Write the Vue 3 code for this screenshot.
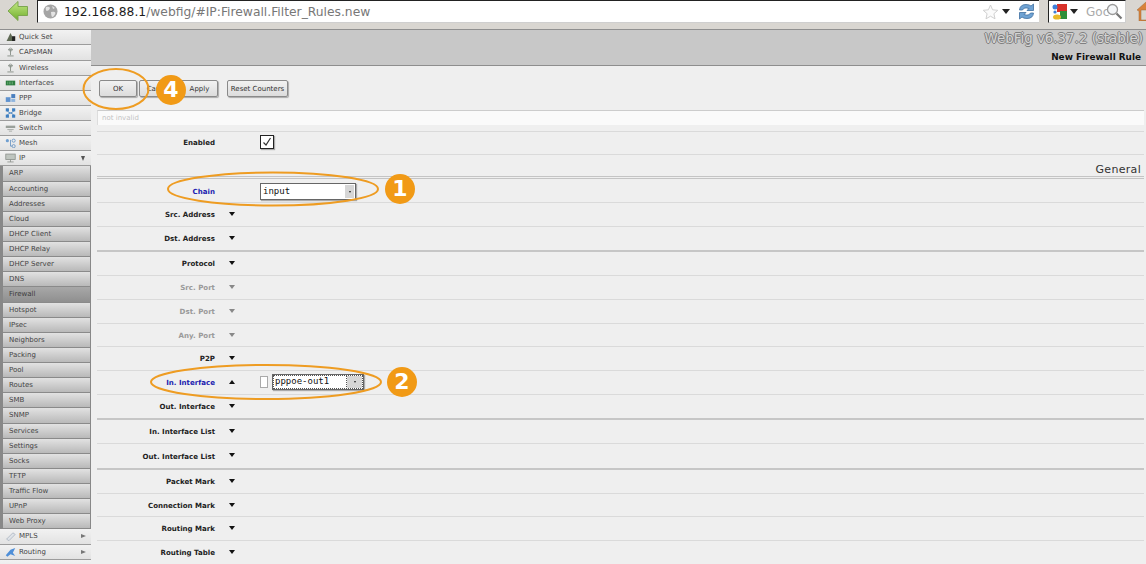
<script setup>
const top1 = [
  { n: 'Quick Set', i: 'quick' }, { n: 'CAPsMAN', i: 'ant' }, { n: 'Wireless', i: 'ant' },
  { n: 'Interfaces', i: 'iface' }, { n: 'PPP', i: 'ppp' }, { n: 'Bridge', i: 'bridge' },
  { n: 'Switch', i: 'switch' }, { n: 'Mesh', i: 'mesh' }, { n: 'IP', i: 'ip', arrow: 'down' }
]
const subs = ['ARP','Accounting','Addresses','Cloud','DHCP Client','DHCP Relay','DHCP Server','DNS','Firewall','Hotspot','IPsec','Neighbors','Packing','Pool','Routes','SMB','SNMP','Services','Settings','Socks','TFTP','Traffic Flow','UPnP','Web Proxy']
const top2 = [
  { n: 'MPLS', i: 'mpls', arrow: 'right' }, { n: 'Routing', i: 'routing', arrow: 'right' }
]
const rows = [
  { l: 'Chain', blue: true, sel: 'input', cls: 'first' },
  { l: 'Src. Address', a: 'down' },
  { l: 'Dst. Address', a: 'down', cls: 'heavy' },
  { l: 'Protocol', a: 'down' },
  { l: 'Src. Port', a: 'down', dis: true },
  { l: 'Dst. Port', a: 'down', dis: true },
  { l: 'Any. Port', a: 'down', dis: true, cls: 'tight' },
  { l: 'P2P', a: 'down' },
  { l: 'In. Interface', a: 'up', blue: true, iface: 'pppoe-out1' },
  { l: 'Out. Interface', a: 'down', cls: 'heavy' },
  { l: 'In. Interface List', a: 'down' },
  { l: 'Out. Interface List', a: 'down', cls: 'heavy wide' },
  { l: 'Packet Mark', a: 'down' },
  { l: 'Connection Mark', a: 'down', cls: 'tight' },
  { l: 'Routing Mark', a: 'down' },
  { l: 'Routing Table', a: 'down' }
]
</script>

<template>
  <div class="page">
    <header class="browser">
      <svg class="back" width="22" height="22" viewBox="0 0 22 22">
        <defs>
          <linearGradient id="gb" x1="0" y1="0" x2="0" y2="1">
            <stop offset="0" stop-color="#c4e884" /><stop offset="1" stop-color="#6fae2c" />
          </linearGradient>
        </defs>
        <path d="M1 11 L11 1.5 V6.5 H20.5 V15.5 H11 V20.5 Z" fill="url(#gb)" stroke="#7da650" stroke-width="1" />
      </svg>
      <div class="url">
        <svg width="15" height="15" viewBox="0 0 15 15" class="globe">
          <circle cx="7.5" cy="7.5" r="7" fill="#a5a5a5" />
          <path d="M3 3 Q6 2 7 4 Q6 7 3.5 7 Q2 5 3 3 M8 8 Q12 7 12.5 9 Q11 13 9 13 Q8 11 8 8 M9 2 L12 4 L10 5Z" fill="#e4e4e4" />
        </svg>
        <span class="host">192.168.88.1</span><span class="path">/webfig/#IP:Firewall.Filter_Rules.new</span>
        <span class="url-end">
          <svg width="17" height="16" viewBox="0 0 17 16"><path d="M8.5 1 L10.6 5.8 L15.8 6.3 L11.9 9.7 L13 14.8 L8.5 12.2 L4 14.8 L5.1 9.7 L1.2 6.3 L6.4 5.8 Z" fill="#fbfbfb" stroke="#d0d0d0" /></svg>
          <i class="tri"></i>
          <svg class="reload" width="17" height="17" viewBox="0 0 17 17">
            <path d="M1.5 7 Q2 1.5 8 1.5 Q11.5 1.5 13 3 L15.5 1 V7.5 H9 L11 5.5 Q6 3.8 4.5 7 Z" fill="#6fa3d4" stroke="#3f6f9f" stroke-width=".8" />
            <path d="M15.5 10 Q15 15.5 9 15.5 Q5.5 15.5 4 14 L1.5 16 V9.5 H8 L6 11.5 Q11 13.2 12.5 10 Z" fill="#6fa3d4" stroke="#3f6f9f" stroke-width=".8" />
          </svg>
        </span>
      </div>
      <div class="search">
        <svg width="16" height="17" viewBox="0 0 16 17">
          <rect x="5" y="1" width="10" height="8" fill="#d8322a" />
          <rect x="8" y="8" width="7" height="8" fill="#2f8f3a" />
          <circle cx="3" cy="4" r="2.5" fill="#3f7fd8" />
          <circle cx="3" cy="9" r="1.6" fill="#3f7fd8" />
          <ellipse cx="5" cy="14" rx="4" ry="2.6" fill="#e9b92c" />
        </svg>
        <i class="tri"></i>
        <span class="goo">Goc</span>
        <svg class="lens" width="17" height="17" viewBox="0 0 17 17">
          <circle cx="6.5" cy="6.5" r="5" fill="#f4f6f8" stroke="#9a9a9a" stroke-width="1.3" />
          <path d="M10.5 10.5 L15.5 15.5" stroke="#777" stroke-width="2.2" />
        </svg>
      </div>
      <svg class="home" width="10" height="20" viewBox="0 0 10 20">
        <path d="M0 9 L9 1 L10 2 V9 H4 V19 H10 V20 H2 V10 Z" fill="#d9823b" stroke="#9c6a3a" stroke-width=".5" />
      </svg>
    </header>

    <div class="main">
      <nav class="side">
        <div v-for="t in top1" :key="t.n" class="item">
          <svg class="ic" width="11" height="10" viewBox="0 0 14 12">
            <template v-if="t.i === 'quick'"><path d="M2 11 L7 1 L12 11 Z" fill="#5f6a55" /><rect x="9" y="5" width="4" height="6" fill="#222" /></template>
            <template v-else-if="t.i === 'ant'"><path d="M7 3 V10 M3 11 H11 M4 3 H10" stroke="#8b938b" stroke-width="1.2" fill="none" /><circle cx="7" cy="3" r="2" fill="none" stroke="#8b938b" /></template>
            <template v-else-if="t.i === 'iface'"><rect x="1" y="3" width="12" height="6" fill="#2f7d3f" /><path d="M3 5 H11 M3 7 H11" stroke="#9ad0a5" stroke-dasharray="1 1" /></template>
            <template v-else-if="t.i === 'ppp'"><rect x="1" y="5" width="6" height="6" fill="#5f92cf" /><rect x="8" y="1" width="5" height="5" fill="#4a7fbf" /><rect x="8" y="7" width="5" height="4" fill="#8fb5de" /></template>
            <template v-else-if="t.i === 'bridge'"><rect x="1" y="0" width="4" height="4" fill="#3f7fc0" /><rect x="9" y="0" width="4" height="4" fill="#3f7fc0" /><rect x="1" y="8" width="4" height="4" fill="#3f7fc0" /><rect x="9" y="8" width="4" height="4" fill="#3f7fc0" /><path d="M3 4 L7 6 L11 4 M3 8 L7 6 L11 8" stroke="#3f7fc0" fill="none" /></template>
            <template v-else-if="t.i === 'switch'"><rect x="1" y="3" width="12" height="3" fill="#9aa09a" /><path d="M3 8 H11 M5 10 H9" stroke="#9aa09a" /></template>
            <template v-else-if="t.i === 'mesh'"><circle cx="3" cy="3" r="2" fill="#6f9fd0" /><circle cx="11" cy="3" r="2" fill="none" stroke="#5f8fc0" /><circle cx="11" cy="10" r="2" fill="none" stroke="#5f8fc0" /><path d="M7 2 V10 H9" stroke="#5f8fc0" fill="none" /></template>
            <template v-else><rect x="1" y="1" width="12" height="7" fill="#bfc5bf" stroke="#8a8f8a" /><path d="M3 11 H11 M7 8 V11" stroke="#8a8f8a" /></template>
          </svg>
          <span>{{ t.n }}</span>
          <i v-if="t.arrow" class="caret-d"></i>
        </div>
        <div class="subs">
          <div v-for="s in subs" :key="s" class="sub" :class="{ on: s === 'Firewall' }">{{ s }}</div>
        </div>
        <div v-for="t in top2" :key="t.n" class="item">
          <svg class="ic" width="11" height="10" viewBox="0 0 14 12">
            <template v-if="t.i === 'mpls'"><path d="M2 10 L10 2 L13 4 L5 12 Z" fill="#dfe3e8" stroke="#aab4c0" /></template>
            <template v-else><path d="M1 10 L7 3 L13 1 L10 7 L13 11 L7 9 L3 12 Z" fill="#4f8fd8" /></template>
          </svg>
          <span>{{ t.n }}</span>
          <i class="caret-r"></i>
        </div>
        <div class="item"></div>
      </nav>

      <section class="content">
        <div class="head">
          <div class="brand">WebFig v6.37.2 (stable)</div>
          <div class="title">New Firewall Rule</div>
        </div>
        <div class="btns">
          <button class="btn ok">OK</button>
          <button class="btn cancel">Cancel</button>
          <button class="btn apply">Apply</button>
          <button class="btn reset">Reset Counters</button>
        </div>
        <div class="form">
          <div class="msg">not invalid</div>
          <div class="row enabled">
            <label class="lab">Enabled</label>
            <span class="check">
              <svg width="10" height="10" viewBox="0 0 10 10"><path d="M1.5 5.5 L4 8 L8.5 1" fill="none" stroke="#333" stroke-width="1.2" /></svg>
            </span>
          </div>
          <div class="row general">General</div>
          <div v-for="r in rows" :key="r.l" class="row" :class="r.cls">
            <label class="lab" :class="{ blue: r.blue, dis: r.dis }">{{ r.l }}</label>
            <i v-if="r.a" class="arr" :class="[r.a, { dis: r.dis }]"></i>
            <span v-if="r.sel" class="sel chain">{{ r.sel }}<b class="drop"><i></i></b></span>
            <template v-if="r.iface">
              <span class="mini"></span>
              <span class="sel ifc">{{ r.iface }}<b class="drop"><i></i></b></span>
            </template>
          </div>
        </div>
      </section>
    </div>

    <svg class="marks" width="1146" height="564" viewBox="0 0 1146 564">
      <ellipse cx="116" cy="89" rx="32.5" ry="20" class="ring" />
      <ellipse cx="273" cy="189" rx="105" ry="16.5" class="ring" />
      <ellipse cx="266" cy="382" rx="115" ry="17" class="ring" />
    </svg>
    <span class="badge b4">4</span>
    <span class="badge b1">1</span>
    <span class="badge b2">2</span>
  </div>
</template>

<style scoped>
.page { position: relative; width: 1146px; height: 564px; overflow: hidden; background: #efefef; font-family: "DejaVu Sans", sans-serif; display: flex; flex-direction: column; }
.browser { height: 29px; flex: none; display: flex; background: #d9d6d1; border-bottom: 1px solid #8f8f8f; box-sizing: content-box; align-items: flex-start; }
.back { margin: 0 0 0 7px; flex: none; }
.url { width: 1001px; height: 21px; margin-left: 8px; flex: none; background: #fff; border: 1px solid #222; border-width: 1px 0 0 1px; border-bottom: 1px solid #cfcfcf; display: flex; align-items: center; font-size: 12.3px; line-height: 20px; font-family: "DejaVu Sans", sans-serif; white-space: nowrap; }
.globe { margin: 0 6px 0 5px; flex: none; }
.host { color: #1c1c1c; }
.path { color: #777; }
.url-end { margin-left: auto; display: flex; align-items: center; gap: 3px; padding-right: 4px; }
.reload { margin-left: 5px; }
.tri { display: inline-block; width: 0; height: 0; border: 4px solid transparent; border-top: 5px solid #222; border-bottom: 0; }
.search { width: 78px; margin-left: 9px; flex: none; background: #fff; border: 1px solid #222; border-width: 1px 0 0 1px; border-bottom: 1px solid #cfcfcf; border-right: 1px solid #cfcfcf; display: flex; align-items: center; gap: 2px; padding-left: 3px; box-sizing: border-box; height: 23px; }
.goo { color: #aaa; font-size: 12px; margin-left: 6px; width: 24px; white-space: nowrap; }
.lens { margin-left: -6px; position: relative; }
.home { margin: 1px 0 0 11px; flex: none; }

.main { flex: 1; display: flex; min-height: 0; }
.side { width: 91px; flex: none; background: #8c8c8c; padding-top: .3px; }
.item { height: 15.13px; box-sizing: border-box; display: flex; align-items: center; background: linear-gradient(#f2f2f2, #e2e2e2); border-bottom: 1px solid #9c9c9c; font-size: 7px; color: #444; padding-left: 5px; overflow: hidden; }
.ic { flex: none; margin-right: 3px; }
.caret-d { margin-left: auto; margin-right: 6px; width: 0; height: 0; border: 2.5px solid transparent; border-top: 5px solid #555; border-bottom: 0; }
.caret-r { margin-left: auto; margin-right: 5px; width: 0; height: 0; border: 2.5px solid transparent; border-left: 5px solid #777; border-right: 0; }
.subs { padding-left: 3px; padding-right: 1px; background: #888; }
.sub { height: 15.13px; box-sizing: border-box; display: flex; align-items: center; background: linear-gradient(#e2e2e2, #b9b9b9); border-bottom: 1px solid #8a8a8a; font-size: 7px; color: #444; padding-left: 6px; }
.sub.on { background: linear-gradient(#a8a8a8, #8f8f8f); color: #3a3a3a; }

.content { flex: 1; min-width: 0; display: flex; flex-direction: column; }
.head { height: 35px; flex: none; background: #c8c8c8; border-bottom: 1px solid #8e8e8e; display: flex; flex-direction: column; align-items: flex-end; }
.brand { font-size: 13.4px; font-weight: normal; line-height: 18px; margin-right: 3px; color: #d4d4d4; text-shadow: -1px 0 #808080, 1px 0 #808080, 0 -1px #808080, 0 1px #808080; white-space: nowrap; }
.title { font-size: 8.9px; font-weight: bold; color: #111; line-height: 12px; margin-top: 3px; margin-right: 5px; }
.btns { height: 44px; flex: none; display: flex; align-items: flex-start; padding: 14px 0 0 8px; box-sizing: border-box; }
.btn { height: 17px; padding: 0; font: 7px "DejaVu Sans", sans-serif; color: #333; background: linear-gradient(#f2f2f2, #dcdcdc); border: 1px solid #8a8a8a; border-radius: 2px; box-shadow: 1px 1px 1px #aaa; }
.ok { width: 38px; }
.cancel { width: 39px; margin-left: 2px; }
.apply { width: 39px; margin-left: 1px; padding-left: 2px; }
.reset { width: 61px; margin-left: 9px; }
.form { margin-left: 6px; margin-right: 2px; flex: 1; }
.msg { height: 14px; margin-bottom: 6px; box-sizing: content-box; background: #fafafa; border-top: 1px solid #ccc; border-left: 1px solid #ddd; font-size: 7px; color: #c4c4c4; line-height: 14px; padding-left: 4px; }
.row { height: 24px; box-sizing: border-box; display: flex; align-items: center; border-bottom: 1px solid #dadada; position: relative; flex: none; }
.row.enabled { border-top: 1px solid #dadada; height: 24px; }
.row.enabled .lab { margin-bottom: 2px; }
.row.general { justify-content: flex-end; font-size: 11px; letter-spacing: .3px; color: #333; padding: 8px 3px 0 0; border-bottom: 3px double #c4c4c4; }
.row.first .lab { margin-top: 2px; }
.row.heavy { height: 25px; border-bottom: 2px solid #c6c6c6; }
.row.tight { height: 23px; }
.row.wide { height: 26px; }
.lab { width: 118px; flex: none; text-align: right; font-size: 7.05px; font-weight: bold; color: #222; white-space: nowrap; }
.lab.blue { color: #1c1cb0; }
.lab.dis { color: #999; }
.arr { position: absolute; left: 132px; top: 9px; width: 0; height: 0; border: 3.5px solid transparent; }
.arr.down { border-top: 4px solid #111; border-bottom: 0; }
.arr.up { border-bottom: 4px solid #111; border-top: 0; }
.arr.down.dis { border-top-color: #888; }
.check { position: absolute; left: 163px; top: 3px; width: 14px; height: 14px; box-sizing: border-box; background: #fff; border: 1px solid #222; box-shadow: 1px 1px 1px #aaa; display: flex; align-items: center; justify-content: center; }
.sel { position: absolute; height: 17px; box-sizing: border-box; background: #fff; border: 1px solid #666; box-shadow: 1px 1px 1px #aaa; font-family: "DejaVu Sans Mono", monospace; font-size: 9px; color: #111; line-height: 15px; padding-left: 2px; }
.chain { left: 163px; top: 4px; width: 96px; }
.ifc { left: 175px; top: 3px; width: 92px; height: 16px; line-height: 13px; outline: 1px dotted #555; outline-offset: -2px; }
.mini { position: absolute; left: 163px; top: 5px; width: 8px; height: 12px; box-sizing: border-box; background: #fff; border: 1px solid #aaa; }
.drop { position: absolute; right: 1px; top: 1px; bottom: 1px; width: 9px; background: #d6d6d6; display: flex; align-items: center; justify-content: center; }
.ifc .drop { width: 15px; outline: 1px dotted #555; }
.drop i { width: 0; height: 0; border: 1.5px solid transparent; border-top: 2px solid #222; border-bottom: 0; }
.marks { position: absolute; left: 0; top: 0; pointer-events: none; }
.ring { fill: none; stroke: #ee9c22; stroke-width: 2; }
.badge { position: absolute; width: 30px; height: 30px; border-radius: 50%; background: #f19a16; color: #fff; font: bold 22px/30px "DejaVu Sans", sans-serif; text-align: center; }
.b4 { left: 156px; top: 75px; }
.b1 { left: 385px; top: 174px; }
.b2 { left: 387px; top: 367px; }
</style>
